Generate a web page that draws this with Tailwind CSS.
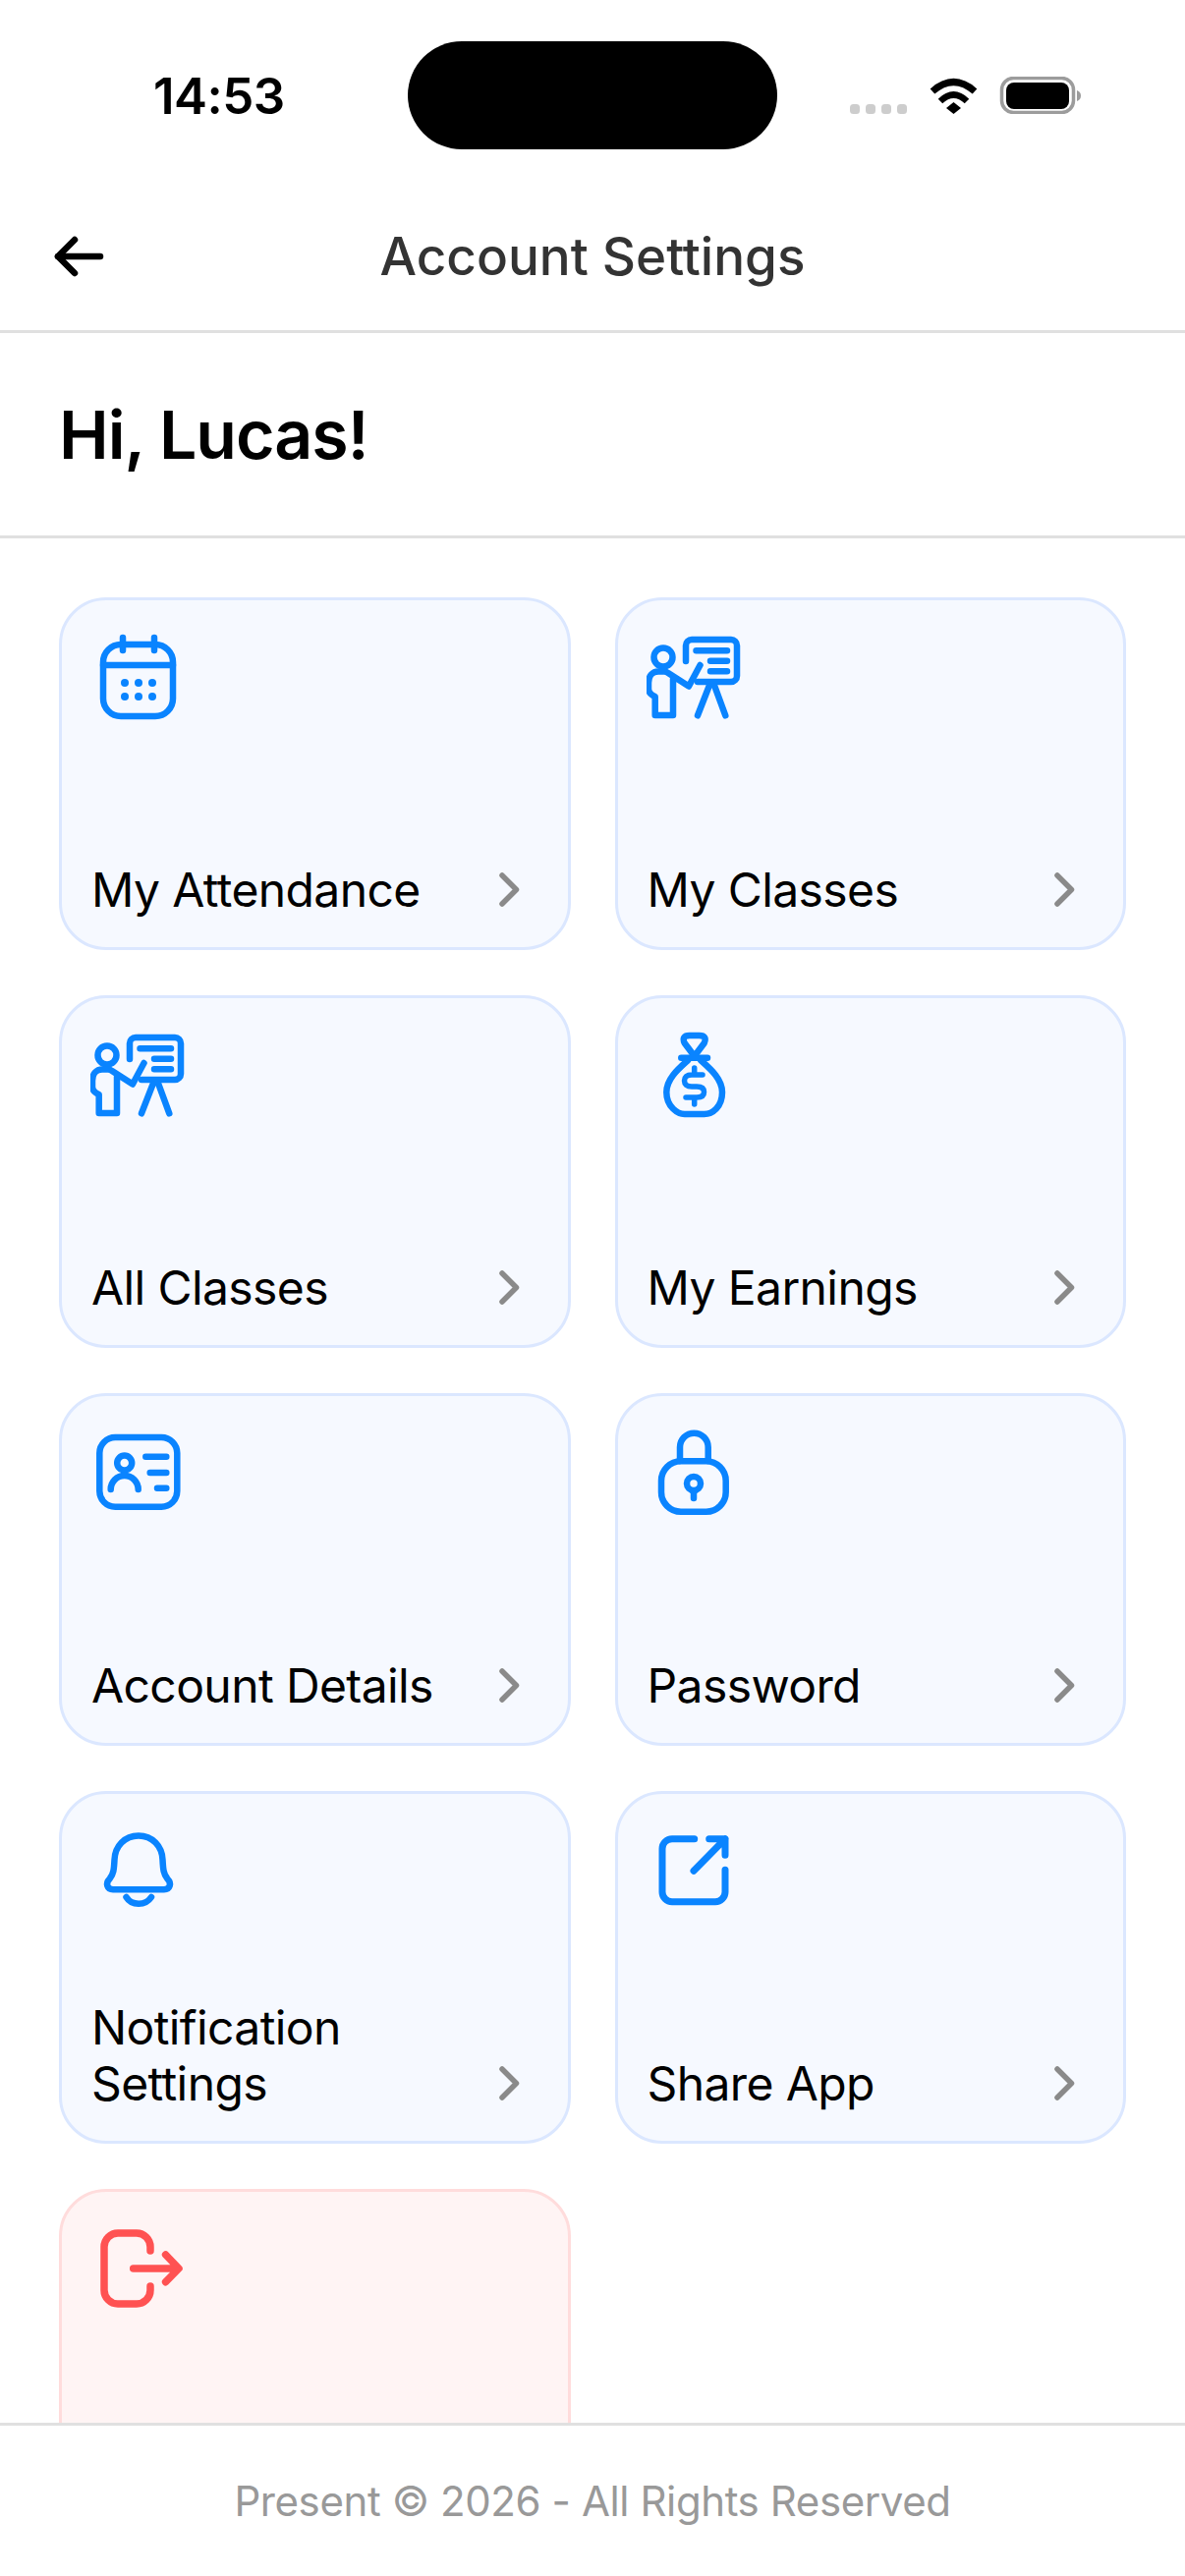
<!DOCTYPE html>
<html lang="en">

<head>
    <meta charset="UTF-8">
    <meta name="viewport" content="width=device-width, initial-scale=1.0">
    <title>Account Settings</title>
    <script src="https://cdn.jsdelivr.net/npm/@tailwindcss/browser@4"></script>
</head>

<body class="bg-white text-black font-['Inter',sans-serif]">
    <div class="flex flex-col h-[2622px] w-[1206px] overflow-hidden">

        <!-- Status bar -->
        <div class="flex items-center shrink-0 h-[186px] pb-[34px] pt-[42px] pl-[156px] box-border">
            <span class="w-[134px] text-[51px] leading-none font-semibold tracking-[-0.5px] whitespace-nowrap">14:53</span>
            <div class="w-[376px] h-[110px] ml-[125px] rounded-[55px] bg-black"></div>
            <svg class="ml-[74px]" width="235" height="38" viewBox="865 78 235 38">
                <rect x="865" y="106" width="10" height="10" rx="3.5" fill="#cdcdcd" />
                <rect x="881" y="106" width="10" height="10" rx="3.5" fill="#cdcdcd" />
                <rect x="897" y="106" width="10" height="10" rx="3.5" fill="#cdcdcd" />
                <rect x="913" y="106" width="10" height="10" rx="3.5" fill="#cdcdcd" />
                <path d="M949 93Q970.500 74 992 93" fill="none" stroke="#000" stroke-width="7" />
                <path d="M957 103Q970.500 90 984 103" fill="none" stroke="#000" stroke-width="6.500" />
                <path d="M963 110L970.500 104L978 110L970.500 116Z" fill="#000" />
                <rect x="1019.500" y="79.500" width="73" height="35" rx="12" fill="none" stroke="#9c9c9c" stroke-width="3.500" />
                <rect x="1024" y="84" width="64" height="27" rx="8" fill="#000" />
                <path d="M1096 92C1099 93 1100 95 1100 97.500C1100 100 1099 102 1096 103Z" fill="#9c9c9c" />
            </svg>
        </div>

        <!-- Header -->
        <header class="relative flex items-center justify-center shrink-0 h-[153px] border-b-[3px] border-[#e0e0e0] box-border">
            <svg class="absolute left-[52px] top-[52px]" width="58" height="46" viewBox="0 0 58 46" fill="none"
                stroke="#000" stroke-width="6.500" stroke-linecap="round" stroke-linejoin="round">
                <path d="M50 23H7" />
                <path d="M24 6L7 23L24 40" />
            </svg>
            <h1 class="text-[53px] leading-none font-medium text-[#333333]">Account Settings</h1>
        </header>

        <!-- Greeting -->
        <section class="flex items-center shrink-0 h-[209px] pl-[60px] border-b-[3px] border-[#e0e0e0] box-border">
            <h2 class="text-[68px] leading-none font-semibold tracking-[-1px]">Hi, Lucas!</h2>
        </section>

        <!-- Menu grid -->
        <main class="flex-1 min-h-0 overflow-hidden px-[60px] pt-[60px]">
            <div class="grid grid-cols-2 gap-x-[45px] gap-y-[46px]">

                <a class="flex flex-col justify-between h-[359px] pt-[32px] px-[32px] pb-[30px] rounded-[48px] border-[3px] border-[#dbe7ff] bg-[#f6f9ff]">
                    <svg class="-ml-[3px] -mt-[2px]" width="96" height="96" viewBox="0 0 96 96" fill="none" stroke="#0a84ff"
                        stroke-width="6.500" stroke-linecap="round" stroke-linejoin="round">
                        <rect x="13" y="15" width="71" height="73" rx="18" />
                        <path d="M13 36H84M33 8V21M65 8V21" />
                        <g fill="#0a84ff" stroke="none">
                            <circle cx="35" cy="54" r="4" />
                            <circle cx="49" cy="54" r="4" />
                            <circle cx="63" cy="54" r="4" />
                            <circle cx="35" cy="68" r="4" />
                            <circle cx="49" cy="68" r="4" />
                            <circle cx="63" cy="68" r="4" />
                        </g>
                    </svg>
                    <div class="flex items-end justify-between">
                        <span class="-ml-[2px] text-[48px] leading-[57px] tracking-[-0.6px]">My Attendance</span>
                        <svg class="shrink-0" width="48" height="57" viewBox="0 0 48 57" fill="none" stroke="#8a8a8a"
                            stroke-width="5.500" stroke-linecap="round" stroke-linejoin="round">
                            <path d="M13 14L27.500 28.500L13 43" />
                        </svg>
                    </div>
                </a>

                <a class="flex flex-col justify-between h-[359px] pt-[32px] px-[32px] pb-[30px] rounded-[48px] border-[3px] border-[#dbe7ff] bg-[#f6f9ff]">
                    <svg class="-ml-[3px] -mt-[2px]" width="96" height="96" viewBox="0 0 96 96" fill="none" stroke="#0a84ff"
                        stroke-width="6.500" stroke-linecap="round" stroke-linejoin="round">
                        <path d="M40 32V16a6 6 0 0 1 6-6H86a6 6 0 0 1 6 6V47a6 6 0 0 1-6 6H52" />
                        <path d="M50.500 21.300H82M65 31.700H82M65 42.300H82" />
                        <circle cx="17" cy="28" r="9.500" />
                        <path d="M54.500 36L43 57.500L22 44Q20 42.500 18 42.500H12C6 42.500 2 47 2 54V60C2 64 5 66.500 8.700 68V87H27V50" />
                        <path d="M63.700 57.300L52 87.300M69.300 57.300L80.300 87.300" />
                    </svg>
                    <div class="flex items-end justify-between">
                        <span class="-ml-[2px] text-[48px] leading-[57px] tracking-[-0.6px]">My Classes</span>
                        <svg class="shrink-0" width="48" height="57" viewBox="0 0 48 57" fill="none" stroke="#8a8a8a"
                            stroke-width="5.500" stroke-linecap="round" stroke-linejoin="round">
                            <path d="M13 14L27.500 28.500L13 43" />
                        </svg>
                    </div>
                </a>

                <a class="flex flex-col justify-between h-[359px] pt-[32px] px-[32px] pb-[30px] rounded-[48px] border-[3px] border-[#dbe7ff] bg-[#f6f9ff]">
                    <svg class="-ml-[3px] -mt-[2px]" width="96" height="96" viewBox="0 0 96 96" fill="none" stroke="#0a84ff"
                        stroke-width="6.500" stroke-linecap="round" stroke-linejoin="round">
                        <path d="M40 32V16a6 6 0 0 1 6-6H86a6 6 0 0 1 6 6V47a6 6 0 0 1-6 6H52" />
                        <path d="M50.500 21.300H82M65 31.700H82M65 42.300H82" />
                        <circle cx="17" cy="28" r="9.500" />
                        <path d="M54.500 36L43 57.500L22 44Q20 42.500 18 42.500H12C6 42.500 2 47 2 54V60C2 64 5 66.500 8.700 68V87H27V50" />
                        <path d="M63.700 57.300L52 87.300M69.300 57.300L80.300 87.300" />
                    </svg>
                    <div class="flex items-end justify-between">
                        <span class="-ml-[2px] text-[48px] leading-[57px] tracking-[-0.6px]">All Classes</span>
                        <svg class="shrink-0" width="48" height="57" viewBox="0 0 48 57" fill="none" stroke="#8a8a8a"
                            stroke-width="5.500" stroke-linecap="round" stroke-linejoin="round">
                            <path d="M13 14L27.500 28.500L13 43" />
                        </svg>
                    </div>
                </a>

                <a class="flex flex-col justify-between h-[359px] pt-[32px] px-[32px] pb-[30px] rounded-[48px] border-[3px] border-[#dbe7ff] bg-[#f6f9ff]">
                    <svg class="-ml-[3px] -mt-[2px]" width="96" height="96" viewBox="0 0 96 96" fill="none" stroke="#0a84ff"
                        stroke-width="6.500" stroke-linecap="round" stroke-linejoin="round">
                        <path d="M48.700 29L38.700 15.700Q35.300 8 43.700 8H53.700Q62 8 58.700 15.700Z" />
                        <path d="M35.300 30.700H62" />
                        <path d="M42 33.300C32 42.300 20.300 52.300 20.300 65.700C20.300 80.700 32 88 38.700 88H58.700C67 88 77 80.700 77 65.700C77 52.300 65.300 42.300 55.300 33.300" />
                        <path d="M57 48H46C41 48 38.500 50.500 38.500 54C38.500 57.500 41 60 46 60H51C56 60 58.500 62 58.500 65.500C58.500 69 56 71 51 71H40M48.700 41V47M48.700 72V78" stroke-width="5.500" />
                    </svg>
                    <div class="flex items-end justify-between">
                        <span class="-ml-[2px] text-[48px] leading-[57px] tracking-[-0.6px]">My Earnings</span>
                        <svg class="shrink-0" width="48" height="57" viewBox="0 0 48 57" fill="none" stroke="#8a8a8a"
                            stroke-width="5.500" stroke-linecap="round" stroke-linejoin="round">
                            <path d="M13 14L27.500 28.500L13 43" />
                        </svg>
                    </div>
                </a>

                <a class="flex flex-col justify-between h-[359px] pt-[32px] px-[32px] pb-[30px] rounded-[48px] border-[3px] border-[#dbe7ff] bg-[#f6f9ff]">
                    <svg class="-ml-[3px] -mt-[2px]" width="96" height="96" viewBox="0 0 96 96" fill="none" stroke="#0a84ff"
                        stroke-width="6.500" stroke-linecap="round" stroke-linejoin="round">
                        <rect x="9.300" y="12" width="79" height="70.700" rx="16" />
                        <circle cx="34.700" cy="38" r="7.500" />
                        <path d="M20.700 65A14 14 0 0 1 48.700 65" />
                        <path d="M56.300 31.700H77.300M60.700 48H77.300M68 63.700H77.300" />
                    </svg>
                    <div class="flex items-end justify-between">
                        <span class="-ml-[2px] text-[48px] leading-[57px] tracking-[-0.6px]">Account Details</span>
                        <svg class="shrink-0" width="48" height="57" viewBox="0 0 48 57" fill="none" stroke="#8a8a8a"
                            stroke-width="5.500" stroke-linecap="round" stroke-linejoin="round">
                            <path d="M13 14L27.500 28.500L13 43" />
                        </svg>
                    </div>
                </a>

                <a class="flex flex-col justify-between h-[359px] pt-[32px] px-[32px] pb-[30px] rounded-[48px] border-[3px] border-[#dbe7ff] bg-[#f6f9ff]">
                    <svg class="-ml-[3px] -mt-[2px]" width="96" height="96" viewBox="0 0 96 96" fill="none" stroke="#0a84ff"
                        stroke-width="6.500" stroke-linecap="round" stroke-linejoin="round">
                        <rect x="15" y="36.300" width="65.700" height="51.400" rx="20" />
                        <path d="M34 36V22a14.350 14.350 0 0 1 28.700 0V36" />
                        <circle cx="48" cy="59" r="7" />
                        <path d="M48 67V74" />
                    </svg>
                    <div class="flex items-end justify-between">
                        <span class="-ml-[2px] text-[48px] leading-[57px] tracking-[-0.6px]">Password</span>
                        <svg class="shrink-0" width="48" height="57" viewBox="0 0 48 57" fill="none" stroke="#8a8a8a"
                            stroke-width="5.500" stroke-linecap="round" stroke-linejoin="round">
                            <path d="M13 14L27.500 28.500L13 43" />
                        </svg>
                    </div>
                </a>

                <a class="flex flex-col justify-between h-[359px] pt-[32px] px-[32px] pb-[30px] rounded-[48px] border-[3px] border-[#dbe7ff] bg-[#f6f9ff]">
                    <svg class="-ml-[3px] -mt-[2px]" width="96" height="96" viewBox="0 0 96 96" fill="none" stroke="#0a84ff"
                        stroke-width="6.500" stroke-linecap="round" stroke-linejoin="round">
                        <path d="M49 12.500C35 12.500 25 23 24.500 37C24 47 23.500 52 19.500 56.500C15 61 17 67.300 23 67.300H75C81 67.300 83 61 78.500 56.500C74.500 52 74 47 73.500 37C73 23 63 12.500 49 12.500Z" />
                        <path d="M36.500 75C42 84 56 84 62 75" />
                    </svg>
                    <div class="flex items-end justify-between">
                        <span class="-ml-[2px] text-[48px] leading-[57px] tracking-[-0.6px]">Notification Settings</span>
                        <svg class="shrink-0" width="48" height="57" viewBox="0 0 48 57" fill="none" stroke="#8a8a8a"
                            stroke-width="5.500" stroke-linecap="round" stroke-linejoin="round">
                            <path d="M13 14L27.500 28.500L13 43" />
                        </svg>
                    </div>
                </a>

                <a class="flex flex-col justify-between h-[359px] pt-[32px] px-[32px] pb-[30px] rounded-[48px] border-[3px] border-[#dbe7ff] bg-[#f6f9ff]">
                    <svg class="-ml-[3px] -mt-[2px]" width="96" height="96" viewBox="0 0 96 96" fill="none" stroke="#0a84ff"
                        stroke-width="7" stroke-linecap="round" stroke-linejoin="round">
                        <path d="M48.700 15.700H26a10 10 0 0 0-10 10V69.700a10 10 0 0 0 10 10H70a10 10 0 0 0 10-10V47.300" />
                        <path d="M48 48.300L80 15.700M63.700 15.700H80V32.300" />
                    </svg>
                    <div class="flex items-end justify-between">
                        <span class="-ml-[2px] text-[48px] leading-[57px] tracking-[-0.6px]">Share App</span>
                        <svg class="shrink-0" width="48" height="57" viewBox="0 0 48 57" fill="none" stroke="#8a8a8a"
                            stroke-width="5.500" stroke-linecap="round" stroke-linejoin="round">
                            <path d="M13 14L27.500 28.500L13 43" />
                        </svg>
                    </div>
                </a>

                <!-- cut off by the footer -->
                <a class="flex flex-col justify-between h-[359px] pt-[32px] px-[32px] pb-[30px] rounded-[48px] border-[3px] border-[#ffdcdc] bg-[#fff4f4]">
                    <svg class="-ml-[3px] -mt-[2px]" width="96" height="96" viewBox="0 0 96 96" fill="none" stroke="#ff5252"
                        stroke-width="7.500" stroke-linecap="round" stroke-linejoin="round">
                        <path d="M61 30V26a14 14 0 0 0-14-14H28a14 14 0 0 0-14 14V70a14 14 0 0 0 14 14H47a14 14 0 0 0 14-14V66" />
                        <path d="M43.700 48H89M76.600 34L90 48L76.600 61.700" />
                    </svg>
                </a>

            </div>
        </main>

        <!-- Footer -->
        <footer class="flex items-center justify-center shrink-0 h-[156px] border-t-[3px] border-[#e0e0e0] box-border bg-white">
            <p class="text-[42px] leading-none tracking-[-0.4px] text-[#999999]">Present © 2026 - All Rights Reserved</p>
        </footer>
    </div>
</body>

</html>
